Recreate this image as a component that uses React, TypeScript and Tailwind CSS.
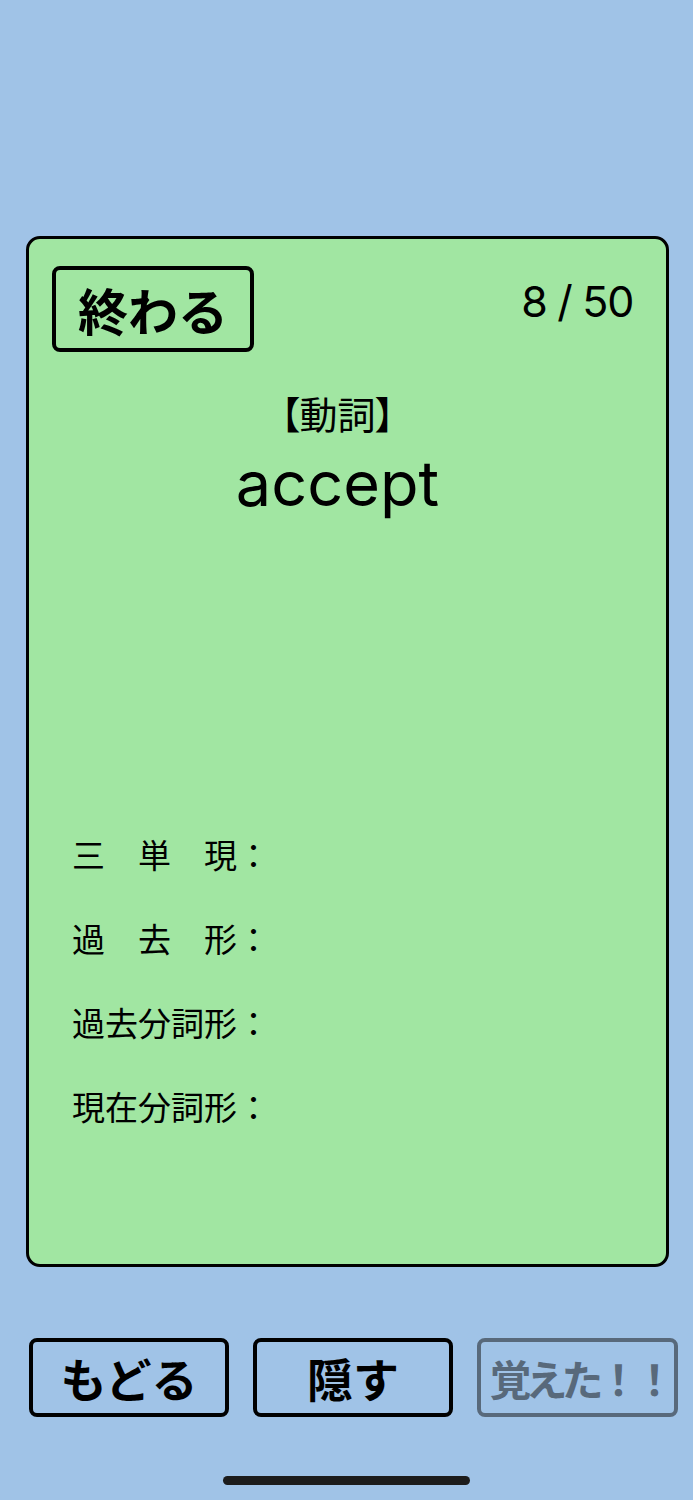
const FORMS = ["三　単　現：", "過　去　形：", "過去分詞形：", "現在分詞形："];

function FrameButton({ label, dim = false }: { label: string; dim?: boolean }) {
  return (
    <button
      className={
        dim
          ? "flex h-[79px] w-[201px] shrink-0 items-center justify-center rounded-[8px] border-[4px] border-[#58697b] pl-[4px] text-[42px] font-bold tracking-[-6px] text-[#58697b]"
          : "flex h-[79px] w-[200px] shrink-0 items-center justify-center rounded-[8px] border-[4px] border-black text-[46px] font-bold text-black"
      }
    >
      {label}
    </button>
  );
}

export default function App() {
  return (
    <div className="flex h-[1500px] flex-col bg-[#a0c3e7] pt-[236px] font-['Noto_Sans_CJK_JP',sans-serif] text-black">
      <div className="ml-[26px] mr-[24px] flex h-[1031px] flex-col rounded-[14px] border-[3px] border-black bg-[#a1e6a2] pl-[23px] pr-[33px] pt-[27px]">
        <div className="flex items-start justify-between">
          <button className="flex h-[86px] w-[202px] items-center justify-center rounded-[8px] border-[4px] border-black text-[50px] font-bold leading-none">
            終わる
          </button>
          <span className="mt-[14px] font-['Inter',sans-serif] text-[43px] leading-none tracking-[-0.03em]">8 / 50</span>
        </div>

        <div className="mt-[42px] flex flex-col items-center pr-[10px]">
          <span className="text-[38px] leading-none [font-feature-settings:'palt']">【動詞】</span>
          <span className="mt-[20px] font-['Inter',sans-serif] text-[63px] leading-none">accept</span>
        </div>

        <div className="mt-[297px] flex flex-col pl-[20px]">
          {FORMS.map((form) => (
            <span key={form} className="text-[33px] leading-[84px]">
              {form}
            </span>
          ))}
        </div>
      </div>

      <div className="mt-[71px] flex gap-[24px] pl-[29px]">
        <FrameButton label="もどる" />
        <FrameButton label="隠す" />
        <FrameButton label="覚えた！！" dim />
      </div>

      <div className="mx-auto mt-[59px] h-[9px] w-[247px] rounded-full bg-[#1c1c1c]" />
    </div>
  );
}
